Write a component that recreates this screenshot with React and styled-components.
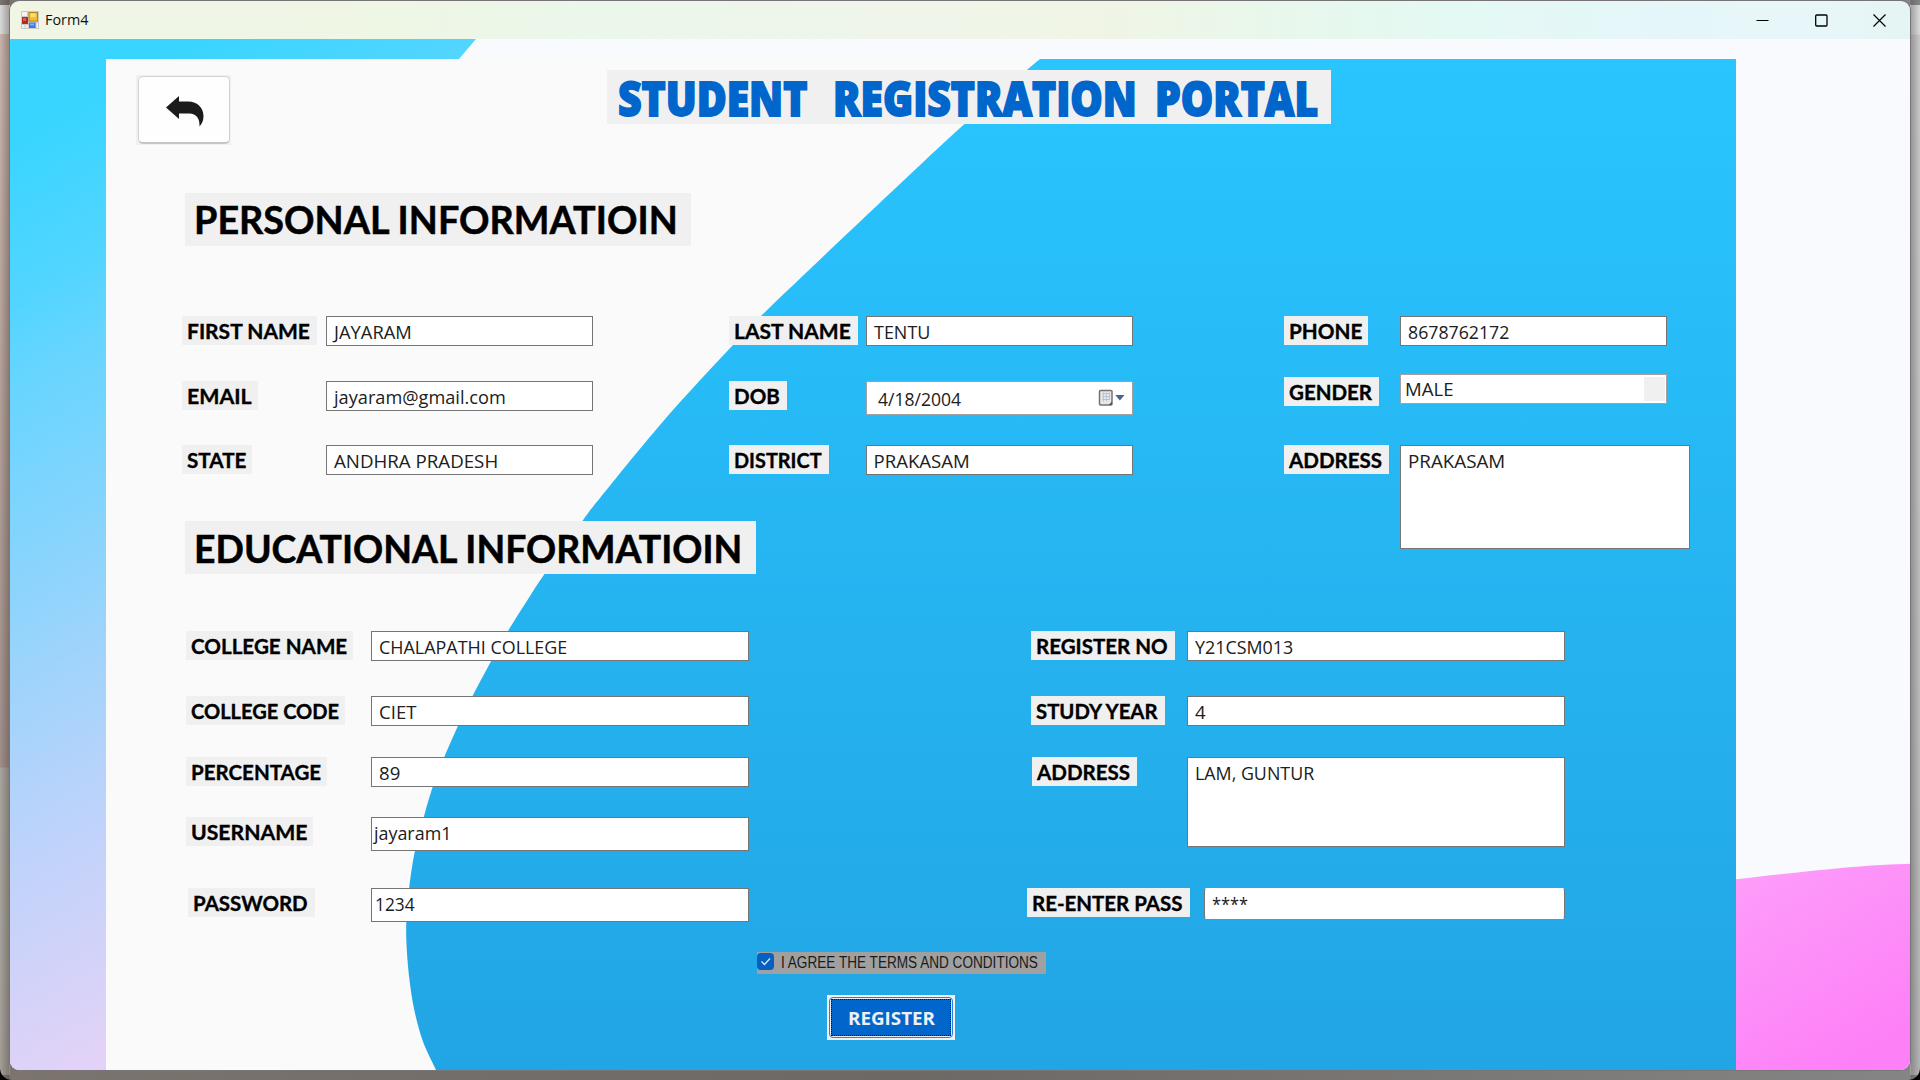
import React, { useLayoutEffect, useRef, useState } from "react";
import styled, { createGlobalStyle, css } from "styled-components";

const Global = createGlobalStyle`
  *, *::before, *::after { box-sizing: border-box; }
  html, body { margin: 0; padding: 0; }
  body { width: 1920px; height: 1080px; overflow: hidden; background: #000; }
`;

const uiFont = `"Open Sans", "Noto Sans", sans-serif`;
const labelFont = `Lato, "Open Sans", sans-serif`;

/* ---------- text fitted to a given width ---------- */

const FitBox = styled.span`
  display: block;
  flex: none;
  white-space: pre;
  width: ${(p) => p.$w}px;
`;
const FitInner = styled.span`
  display: inline-block;
  vertical-align: top;
  transform-origin: 0 0;
`;

function Fit({ w, children }) {
  const ref = useRef(null);
  const [scale, setScale] = useState(1);
  useLayoutEffect(() => {
    if (ref.current) setScale(w / ref.current.offsetWidth);
  }, [w, children]);
  return (
    <FitBox $w={w}>
      <FitInner ref={ref} style={{ transform: `scaleX(${scale})` }}>
        {children}
      </FitInner>
    </FitBox>
  );
}

/* ---------- window frame ---------- */

const Desktop = styled.div`
  width: 1920px;
  height: 1080px;
  padding: 0 9px 9px 9px;
  border-radius: 0 0 12px 12px;
  background:
    linear-gradient(90deg, rgba(0, 0, 0, 0) 0, rgba(60, 50, 45, 0.35) 9px, rgba(0, 0, 0, 0) 10px),
    linear-gradient(270deg, rgba(0, 0, 0, 0) 0, rgba(60, 60, 60, 0.35) 9px, rgba(0, 0, 0, 0) 10px),
    linear-gradient(180deg, #dadada 0 29px, #c8b5ad 29px, #b3a199 400px, #a08f8b 762px, #a9a6a0 763px, #a39f98 1060px) left / 10px 1070px no-repeat,
    linear-gradient(180deg, #dadada 0 29px, #c9c9c9 30px, #b5b5b5 1060px) right / 10px 1070px no-repeat,
    linear-gradient(90deg, #7b746f, #6d6864 900px, #858585);
`;

const Window = styled.div`
  display: flex;
  flex-direction: column;
  height: 1071px;
  border: 1px solid #777577;
  border-radius: 10px;
  overflow: hidden;
`;

const TitleBar = styled.header`
  display: flex;
  align-items: center;
  flex: none;
  height: 38px;
  padding: 0 1px 0 11px;
  background: linear-gradient(90deg, #f0f5e4 0, #eff6e4 350px, #ebf7ea 560px, #eff5ea 860px, #f0f5e5 1080px, #e6f8ee 1330px, #e4f8f5 1480px, #e5f6fa 1680px, #e8f6f9 1820px, #e4f5f4 1900px);
  font: 14px/20px ${uiFont};
  color: #111;
`;
const AppIcon = styled.svg`
  width: 18px;
  height: 18px;
  margin-right: 6px;
`;
const Controls = styled.div`
  display: flex;
  margin-left: auto;
  height: 38px;
`;
const ControlButton = styled.div`
  display: flex;
  align-items: center;
  justify-content: center;
  width: 58.5px;
  svg { display: block; }
`;

const Client = styled.main`
  position: relative;
  flex: 1;
  padding: 20px 0 0 96px;
  background: #f9fafd;
`;
const Backdrop = styled.svg`
  position: absolute;
  inset: 0;
`;
const Panel = styled.section`
  position: relative;
  display: flex;
  flex-direction: column;
  width: 1630px;
  height: 1011px;
  background: #fafafa;
`;
const PanelBody = styled.div`
  position: relative;
  display: flex;
  flex-direction: column;
`;

/* ---------- header ---------- */

const Header = styled.div`
  display: flex;
  align-items: flex-start;
  height: 134px;
  padding: 11px 0 0 30px;
`;
const BackFrame = styled.div`
  width: 95px;
  height: 70px;
  margin-top: 5px;
  padding: 1px 1px 1px 2px;
  background: #f0f0f0;
`;
const BackButton = styled.div`
  display: flex;
  align-items: center;
  justify-content: center;
  height: 68px;
  padding: 2px 0 0 1px;
  border: 1px solid #d2d2d2;
  border-bottom: 2px solid #c4c4c4;
  border-radius: 5px;
  background: #fefefe;
`;
const Title = styled.h1`
  display: flex;
  width: 724px;
  height: 54px;
  margin: 0 0 0 376px;
  padding-left: 11px;
  background: #f0f0f0;
  color: #0066cc;
  font: 800 48px/55px ${uiFont};
  -webkit-text-stroke: 1.8px #0066cc;
`;
const WordGap = styled.span`
  white-space: pre;
  width: ${(p) => p.$w}px;
`;

const SectionTitle = styled.h2`
  width: ${(p) => p.$w}px;
  height: 53px;
  margin: 0 0 0 79px;
  padding-left: 9px;
  background: #f0f0f0;
  color: #000;
  font: bold 37.7px/${(p) => p.$line || 54}px ${labelFont};
  -webkit-text-stroke: 0.5px #000;
`;

/* ---------- form fields ---------- */

const Columns = styled.div`
  display: flex;
  align-items: flex-start;
  height: ${(p) => p.$h}px;
  padding: ${(p) => p.$top}px 0 0 ${(p) => p.$left}px;
`;
const Column = styled.div`
  flex: none;
  width: ${(p) => p.$w}px;
`;
const FieldRow = styled.div`
  display: flex;
  align-items: flex-start;
  height: ${(p) => p.$h}px;
  margin-left: ${(p) => p.$shift || 0}px;
`;
const LabelSlot = styled.div`
  flex: none;
  width: ${(p) => p.$w}px;
  padding-top: ${(p) => p.$drop || 0}px;
`;
const Label = styled.div`
  width: ${(p) => p.$w}px;
  height: 29px;
  padding-left: 5px;
  background: #f0f0f0;
  color: #000;
  font: bold 21px/29px ${labelFont};
  -webkit-text-stroke: 0.35px #000;
`;

const Control = styled.div`
  display: flex;
  flex: none;
  width: ${(p) => p.$w}px;
  height: ${(p) => p.$h}px;
  padding-left: ${(p) => p.$pad}px;
  border: 1px solid #757575;
  background: #fff;
  color: #202020;
  font: 18.6px/${(p) => p.$line || 30}px ${uiFont};
  ${(p) =>
    p.$soft &&
    css`
      border-color: #a3a0a3;
    `}
  ${(p) =>
    p.$round &&
    css`
      border-top-color: #fff;
      border-bottom-color: #fff;
      border-radius: 3px;
    `}
`;
const ComboButton = styled.span`
  width: 21px;
  height: 24px;
  margin: 2px 1px 0 auto;
  background: #f0f0f0;
`;
const DateTools = styled.svg`
  margin: 7px 7px 0 auto;
`;

function Field({ f, slot, width }) {
  return (
    <FieldRow $h={f.row} $shift={f.shift}>
      <LabelSlot $w={f.slot || slot} $drop={f.drop}>
        <Label $w={f.lw}>
          <Fit w={f.lt - 1}>{f.label}</Fit>
        </Label>
      </LabelSlot>
      <Control
        $w={f.w || width}
        $h={f.h || 30}
        $pad={f.pad ?? 7}
        $line={f.line}
        $soft={f.kind === "date" || f.kind === "combo"}
        $round={f.kind === "secret"}
      >
        <Fit w={f.vt - 1}>{f.value}</Fit>
        {f.kind === "combo" && <ComboButton />}
        {f.kind === "date" && (
          <DateTools width="27" height="18" viewBox="0 0 27 18">
            <rect x="1.500" y="1.500" width="12.500" height="14.500" rx="1" fill="#e6e8ec" stroke="#77716f" strokeWidth="1.500" />
            <path d="M4 4.500h8M4 7.500h8M4 10.500h8M5.500 3.500v9M8.500 3.500v9M11.500 3.500v7" stroke="#b9c3d1" strokeWidth="1" />
            <path d="M10.500 16l3.500-3.500v3.500z" fill="#5d5856" />
            <path d="M17.300 6h9.200l-4.600 5.600z" fill="#4a6191" />
          </DateTools>
        )}
      </Control>
    </FieldRow>
  );
}

const personal = [
  {
    width: 547,
    slot: 144,
    fields: [
      { label: "FIRST NAME", lw: 135, lt: 124, value: "JAYARAM", vt: 79, row: 65 },
      { label: "EMAIL", lw: 76, lt: 66, value: "jayaram@gmail.com", vt: 173, row: 64 },
      { label: "STATE", lw: 70, lt: 60, value: "ANDHRA PRADESH", vt: 165, row: 30 },
    ],
  },
  {
    width: 555,
    slot: 136.5,
    fields: [
      { label: "LAST NAME", lw: 129, lt: 118, value: "TENTU", vt: 57, row: 65 },
      { label: "DOB", lw: 58, lt: 47, value: "4/18/2004", vt: 84, row: 64, h: 34, pad: 11, line: 33, kind: "date" },
      { label: "DISTRICT", lw: 100, lt: 89, value: "PRAKASAM", vt: 97, row: 30 },
    ],
  },
  {
    width: 410,
    slot: 116,
    fields: [
      { label: "PHONE", lw: 84, lt: 74, value: "8678762172", vt: 102, row: 58 },
      { label: "GENDER", lw: 95, lt: 84, value: "MALE", vt: 50, row: 71, drop: 3, pad: 4, line: 28, kind: "combo" },
      { label: "ADDRESS", lw: 105, lt: 94, value: "PRAKASAM", vt: 98, row: 104, w: 290, h: 104 },
    ],
  },
];

const education = [
  {
    width: 845,
    slot: 185,
    fields: [
      { label: "COLLEGE NAME", lw: 167, lt: 157, value: "CHALAPATHI COLLEGE", vt: 189, row: 65 },
      { label: "COLLEGE CODE", lw: 159, lt: 149, value: "CIET", vt: 38, row: 61 },
      { label: "PERCENTAGE", lw: 141, lt: 131, value: "89", vt: 22, row: 60 },
      { label: "USERNAME", lw: 127, lt: 117, value: "jayaram1", vt: 78, row: 71, h: 34, pad: 2, line: 30 },
      { label: "PASSWORD", lw: 127, lt: 116, value: "1234", vt: 41, row: 34, h: 34, pad: 3, line: 30, shift: 1.5, slot: 183.5 },
    ],
  },
  {
    width: 540,
    slot: 156,
    fields: [
      { label: "REGISTER NO", lw: 144, lt: 133, value: "Y21CSM013", vt: 99, row: 65 },
      { label: "STUDY YEAR", lw: 134, lt: 123, value: "4", vt: 12, row: 61 },
      { label: "ADDRESS", lw: 105, lt: 94, value: "LAM, GUNTUR", vt: 120, row: 131, h: 90, shift: 1, slot: 155 },
      { label: "RE-ENTER PASS", lw: 163, lt: 152, value: "****", vt: 37, row: 31, h: 31, w: 361, shift: -4, slot: 177, kind: "secret" },
    ],
  },
];

/* ---------- footer ---------- */

const Footer = styled.div`
  display: flex;
  flex-direction: column;
  align-items: flex-start;
  padding: 30px 0 0 651px;
`;
const Terms = styled.div`
  display: flex;
  align-items: flex-start;
  width: 289px;
  height: 22px;
  background: #a0a0a0;
  color: #1b1b1b;
  font: 16.3px/20px "Liberation Sans", Arial, sans-serif;
`;
const Tick = styled.span`
  display: flex;
  width: 17px;
  height: 17px;
  margin: 1px 7px 0 0;
  border-radius: 4px;
  background: #0560c0;
`;
const RegisterFrame = styled.div`
  width: 128px;
  height: 45px;
  margin: 21px 0 0 70px;
  padding: 2px;
  background: #f1f1f1;
`;
const RegisterButton = styled.div`
  height: 41px;
  padding: 1px;
  border: 1px solid #2a80d8;
  border-radius: 4px;
  background: #e8eef6;
`;
const RegisterFace = styled.div`
  display: flex;
  height: 37px;
  padding-left: 16px;
  border: 1px dotted #1b1206;
  background: #0066cc;
  color: #f0f0f0;
  font: bold 18.6px/35px ${uiFont};
`;

/* ---------- backdrop curve ---------- */

const edge = [
  [1040, 59], [1027, 70], [964.5, 124], [893.5, 190], [809, 270], [761, 316], [733, 345],
  [666, 418], [600, 498], [582.4, 521], [544.5, 574], [527.5, 600], [508, 631], [489, 665],
  [471.5, 698], [457, 728], [443.5, 759], [432, 789], [423, 820], [414.5, 853], [409, 889],
  [406.3, 922], [406.8, 950], [409.5, 980], [414.3, 1010], [422.8, 1041], [436, 1070],
].map(([x, y]) => [x - 106, y - 59]);

function smooth(points) {
  let d = `M${points[0]}`;
  for (let i = 0; i < points.length - 1; i += 1) {
    const a = points[i - 1] || points[i];
    const b = points[i];
    const c = points[i + 1];
    const e = points[i + 2] || c;
    d += `C${b[0] + (c[0] - a[0]) / 6} ${b[1] + (c[1] - a[1]) / 6} ${c[0] - (e[0] - b[0]) / 6} ${c[1] - (e[1] - b[1]) / 6} ${c[0]} ${c[1]}`;
  }
  return d;
}

export default function App() {
  return (
    <>
      <Global />
      <Desktop>
        <Window>
          <TitleBar>
            <AppIcon viewBox="0 0 18 18">
              <rect width="18" height="18" fill="#c9c9c9" />
              <rect x="1" y="1" width="5" height="4" fill="#f3f3f0" />
              <rect x="1" y="14" width="2.500" height="3" fill="#f0f0f0" />
              <rect x="4.500" y="14" width="2.500" height="3" fill="#f0f0f0" />
              <rect x="15.500" y="12" width="1.500" height="5" fill="#f0f0f0" />
              <rect x="1" y="6" width="6" height="7" fill="#b52a26" />
              <rect x="2" y="7" width="3" height="3" fill="#dd5a50" />
              <rect x="7.500" y="1" width="9.500" height="9.500" fill="#b98a12" />
              <rect x="8.500" y="2" width="7.500" height="7.500" fill="#f3bf2a" />
              <rect x="9.500" y="2.500" width="5" height="3.500" fill="#fde07c" />
              <rect x="8" y="11.500" width="6.500" height="5.500" fill="#3c78dc" />
              <rect x="9" y="12.500" width="4" height="2" fill="#7fb0f5" />
            </AppIcon>
            <Fit w={43}>Form4</Fit>
            <Controls>
              <ControlButton>
                <svg width="13" height="13" viewBox="0 0 13 13"><path d="M.5 6.500h12" stroke="#000" /></svg>
              </ControlButton>
              <ControlButton>
                <svg width="13" height="13" viewBox="0 0 13 13"><rect x=".7" y="1" width="11.300" height="11" rx="1" fill="none" stroke="#000" strokeWidth="1.300" /></svg>
              </ControlButton>
              <ControlButton>
                <svg width="13" height="13" viewBox="0 0 13 13"><path d="M.5.5l12 12M12.500.5l-12 12" stroke="#000" strokeWidth="1.200" /></svg>
              </ControlButton>
            </Controls>
          </TitleBar>
          <Client>
            <Backdrop width="1900" height="1031" viewBox="10 39 1900 1031">
              <defs>
                <linearGradient id="sky" gradientUnits="userSpaceOnUse" x1="0" y1="0" x2="490" y2="870">
                  <stop offset=".12" stopColor="#37d5ff" />
                  <stop offset=".27" stopColor="#52d5ff" />
                  <stop offset=".34" stopColor="#66d5ff" />
                  <stop offset=".55" stopColor="#92d4fc" />
                  <stop offset=".725" stopColor="#b8d3fb" />
                  <stop offset=".97" stopColor="#e3d2f7" />
                </linearGradient>
                <linearGradient id="pink" x1="0" y1="0" x2=".55" y2="1">
                  <stop offset="0" stopColor="#fd9ffa" />
                  <stop offset="1" stopColor="#fd80f7" />
                </linearGradient>
              </defs>
              <path d="M10 39H476L459 59L430 95L107 1070H10Z" fill="url(#sky)" />
              <path d="M1730 880Q1850 866 1890 864.500T1912 864V1072H1730Z" fill="url(#pink)" />
            </Backdrop>
            <Panel>
              <Backdrop width="1630" height="1011" viewBox="0 0 1630 1011">
                <defs>
                  <linearGradient id="sea" x1="0" y1="0" x2="0" y2="1">
                    <stop offset="0" stopColor="#29c5ff" />
                    <stop offset="1" stopColor="#22a5e4" />
                  </linearGradient>
                </defs>
                <path d={`${smooth(edge)}H1631V0Z`} fill="url(#sea)" />
              </Backdrop>
              <PanelBody>
                <Header>
                  <BackFrame>
                    <BackButton>
                      <svg width="40" height="32" viewBox="0 0 40 32">
                        <path d="M1 12.500L14 1v5.500h9c10 0 15.500 7 15.500 14.500c0 5-1.800 8-4 10.500c.5-8-3.500-13-10-13H14V24z" fill="#1b1b1b" />
                      </svg>
                    </BackButton>
                  </BackFrame>
                  <Title>
                    <Fit w={189}>STUDENT</Fit>
                    <WordGap $w={26}> </WordGap>
                    <Fit w={304}>REGISTRATION</Fit>
                    <WordGap $w={18}> </WordGap>
                    <Fit w={163}>PORTAL</Fit>
                  </Title>
                </Header>
                <SectionTitle $w={506}><Fit w={484}>PERSONAL INFORMATIOIN</Fit></SectionTitle>
                <Columns $h={275} $top={70} $left={76}>
                  {personal.map((c) => (
                    <Column key={c.slot} $w={c.width}>
                      {c.fields.map((f) => <Field key={f.label} f={f} slot={c.slot} width={267} />)}
                    </Column>
                  ))}
                </Columns>
                <SectionTitle $w={571} $line={56}><Fit w={548}>EDUCATIONAL INFORMATIOIN</Fit></SectionTitle>
                <Columns $h={348} $top={57} $left={80}>
                  {education.map((c) => (
                    <Column key={c.slot} $w={c.width}>
                      {c.fields.map((f) => <Field key={f.label} f={f} slot={c.slot} width={378} />)}
                    </Column>
                  ))}
                </Columns>
                <Footer>
                  <Terms>
                    <Tick>
                      <svg width="17" height="17" viewBox="0 0 17 17"><path d="M4.500 8.500l3 3l5.500-6" fill="none" stroke="#d7e8fa" strokeWidth="1.300" /></svg>
                    </Tick>
                    <Fit w={257}>I AGREE THE TERMS AND CONDITIONS</Fit>
                  </Terms>
                  <RegisterFrame>
                    <RegisterButton>
                      <RegisterFace><Fit w={87}>REGISTER</Fit></RegisterFace>
                    </RegisterButton>
                  </RegisterFrame>
                </Footer>
              </PanelBody>
            </Panel>
          </Client>
        </Window>
      </Desktop>
    </>
  );
}
